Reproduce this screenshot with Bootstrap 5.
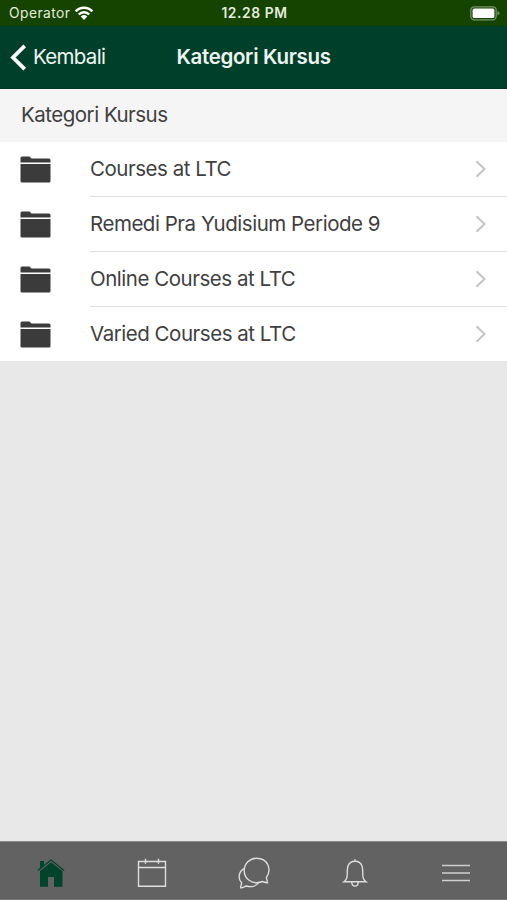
<!DOCTYPE html>
<html lang="id">
<head>
<meta charset="utf-8">
<meta name="viewport" content="width=device-width, initial-scale=1">
<title>Kategori Kursus</title>
<link href="https://cdn.jsdelivr.net/npm/bootstrap@5.3.0/dist/css/bootstrap.min.css" rel="stylesheet">
<style>
body{height:100vh;overflow:hidden;background:#e8e8e8;font-family:Inter,Roboto,sans-serif;color:#3f3f3f;font-size:20.5px;line-height:1.3}
svg{display:block;flex:none}
.status-bar{height:26px;background:#144400;color:#e4ecdf;font-size:13.8px;padding:1px 7px 0 9px}
.carrier{letter-spacing:.45px;padding-top:1px}
.clock{font-weight:600;letter-spacing:.6px;padding-top:1px}
.title-bar{height:63px;background:#00402a;color:#eef5f1;border-bottom:1px solid #003522;padding:0 10px}
.side{flex:1 1 0}
.back-link{color:inherit;gap:6px;letter-spacing:-.7px}
.page-title{font-size:20.5px;font-weight:600;letter-spacing:-.32px}
.section-title{height:53px;background:#f5f5f5;padding:0 21px 1px;font-size:inherit;letter-spacing:-.5px}
.category{height:55px;background:#fff;color:inherit;padding-left:20px}
.category:last-child{height:54px}
.category-body{height:55px;margin-left:39px;padding-right:20px;border-bottom:1px solid #dedede;letter-spacing:-.47px}
.category:last-child .category-body{height:54px;border-bottom:0}
.tab-bar{height:59px;background:#626262;border-top:1px solid #8a8a8a;border-bottom:1px solid #787878}
.tab-bar a{flex:1 1 0;color:#dedede;padding-top:4px}
</style>
<script src="https://cdn.jsdelivr.net/npm/bootstrap@5.3.0/dist/js/bootstrap.bundle.min.js"></script>
</head>
<body class="d-flex flex-column">
<svg width="0" height="0" class="d-none">
  <symbol id="folder" viewBox="0 0 31 27"><path fill="#3b3b3b" d="M.5 2Q.5.5 2 .5h7.500l2 2H29Q30.500 2.500 30.500 4v2.500H.5zM.5 8h30v17q0 1.500-1.500 1.500H2Q.5 26.500.5 25z"/></symbol>
  <symbol id="chevron" viewBox="0 0 12 18"><path fill="none" stroke="#c4c4c4" stroke-width="2" d="m1.500 1.300 8 7.700-8 7.700"/></symbol>
</svg>
<header>
  <div class="status-bar d-flex align-items-center">
    <div class="side d-flex align-items-center">
      <span class="carrier">Operator</span>
      <svg class="ms-1" width="20" height="16" viewBox="0 0 20 16" fill="none" stroke="#fff" stroke-width="2.500"><path d="M1.700 6.300c4.500-4.700 12.100-4.700 16.600 0M4.800 9.500c2.900-3 7.500-3 10.400 0"/><path fill="#fff" stroke="none" d="M6.700 11.500q3.300-2.800 6.600 0L10 15z"/></svg>
    </div>
    <span class="clock">12.28 PM</span>
    <div class="side d-flex justify-content-end">
      <svg width="30" height="15" viewBox="0 0 30 15"><rect x=".8" y=".8" width="25.400" height="13" rx="3.500" fill="none" stroke="#789369" stroke-width="1.300"/><rect x="2.600" y="2.600" width="21.800" height="9.400" rx="1.500" fill="#fff"/><path d="M27.500 5v4.600q2-.8 2-2.300t-2-2.300z" fill="#789369"/></svg>
    </div>
  </div>
  <nav class="title-bar d-flex align-items-center">
    <div class="side d-flex"><a href="#" class="back-link d-flex align-items-center text-decoration-none"><svg width="17" height="27" viewBox="0 0 17 27" fill="none" stroke="#fff" stroke-width="3.800"><path d="M14.700 1.800 3 13.500l11.700 11.700"/></svg>Kembali</a></div>
    <h1 class="page-title mb-0">Kategori Kursus</h1>
    <div class="side"></div>
  </nav>
</header>
<main class="flex-grow-1">
  <h2 class="section-title d-flex align-items-center mb-0 fw-normal">Kategori Kursus</h2>
  <div>
    <a href="#" class="category d-flex align-items-center text-decoration-none"><svg width="31" height="27"><use href="#folder"/></svg><div class="category-body flex-grow-1 d-flex align-items-center justify-content-between"><span>Courses at LTC</span><svg width="12" height="18"><use href="#chevron"/></svg></div></a>
    <a href="#" class="category d-flex align-items-center text-decoration-none"><svg width="31" height="27"><use href="#folder"/></svg><div class="category-body flex-grow-1 d-flex align-items-center justify-content-between"><span>Remedi Pra Yudisium Periode 9</span><svg width="12" height="18"><use href="#chevron"/></svg></div></a>
    <a href="#" class="category d-flex align-items-center text-decoration-none"><svg width="31" height="27"><use href="#folder"/></svg><div class="category-body flex-grow-1 d-flex align-items-center justify-content-between"><span>Online Courses at LTC</span><svg width="12" height="18"><use href="#chevron"/></svg></div></a>
    <a href="#" class="category d-flex align-items-center text-decoration-none"><svg width="31" height="27"><use href="#folder"/></svg><div class="category-body flex-grow-1 d-flex align-items-center justify-content-between"><span>Varied Courses at LTC</span><svg width="12" height="18"><use href="#chevron"/></svg></div></a>
  </div>
</main>
<nav class="tab-bar d-flex">
  <a href="#" aria-label="Home" class="d-flex align-items-center justify-content-center"><svg width="30" height="30" viewBox="0 0 30 30" fill="#00442c"><path d="M4 3h4v5L4 11z"/><path d="M4 13 15 4.300 26.500 13v15.700H18V19h-6v9.700H4z"/><path fill="none" stroke="#626262" stroke-width="1" d="M1.500 14 15 3.400 28.500 14"/><path fill="none" stroke="#00442c" stroke-width="1.200" d="M1.800 12.500 15 2l13.200 10.500"/></svg></a>
  <a href="#" aria-label="Kalender" class="d-flex align-items-center justify-content-center"><svg width="30" height="30" viewBox="0 0 30 30" fill="none" stroke="currentColor" stroke-width="1.400"><path d="M1.500 3.500h27v24.700h-27zM1.500 9.500h27M8.500.8v5M21.500.8v5"/></svg></a>
  <a href="#" aria-label="Pesan" class="d-flex align-items-center justify-content-center"><svg width="32" height="32" viewBox="0 0 32 32" fill="none" stroke="currentColor" stroke-width="1.400"><path d="M28.300 20.500c1 2 .6 3.600 1.200 5.200-2.500.2-3.600-1-5-1.200C14 28.500 6.200 21.500 6.200 13.400A12.300 12.300 0 0 1 18.500 1.300c11.500 0 15.600 11.500 9.800 19.200z"/><path d="M6.300 11.300C.3 14.500-.2 22 3.500 25.600c.2 2-1 3.600-.8 5.200 2.300.3 3.500-1.200 5.500-1.800 5.300 1.500 10.500.2 12.800-4"/></svg></a>
  <a href="#" aria-label="Notifikasi" class="d-flex align-items-center justify-content-center"><svg width="28" height="30" viewBox="0 0 28 30" fill="none" stroke="currentColor" stroke-width="1.400"><path d="M3 23.800c3-2 3.200-4.500 3.200-7.500 0-6 0-13 7.800-13s7.800 7 7.800 13c0 3 .2 5.500 3.200 7.500zM10.700 24c.2 5.500 6.400 5.500 6.600 0M14 1.200v2"/></svg></a>
  <a href="#" aria-label="Menu" class="d-flex align-items-center justify-content-center"><svg width="28" height="20" viewBox="0 0 28 20" stroke="#cfcfcf" stroke-width="1.600"><path d="M0 2.500h28M0 10h28M0 17.500h28"/></svg></a>
</nav>
</body>
</html>
